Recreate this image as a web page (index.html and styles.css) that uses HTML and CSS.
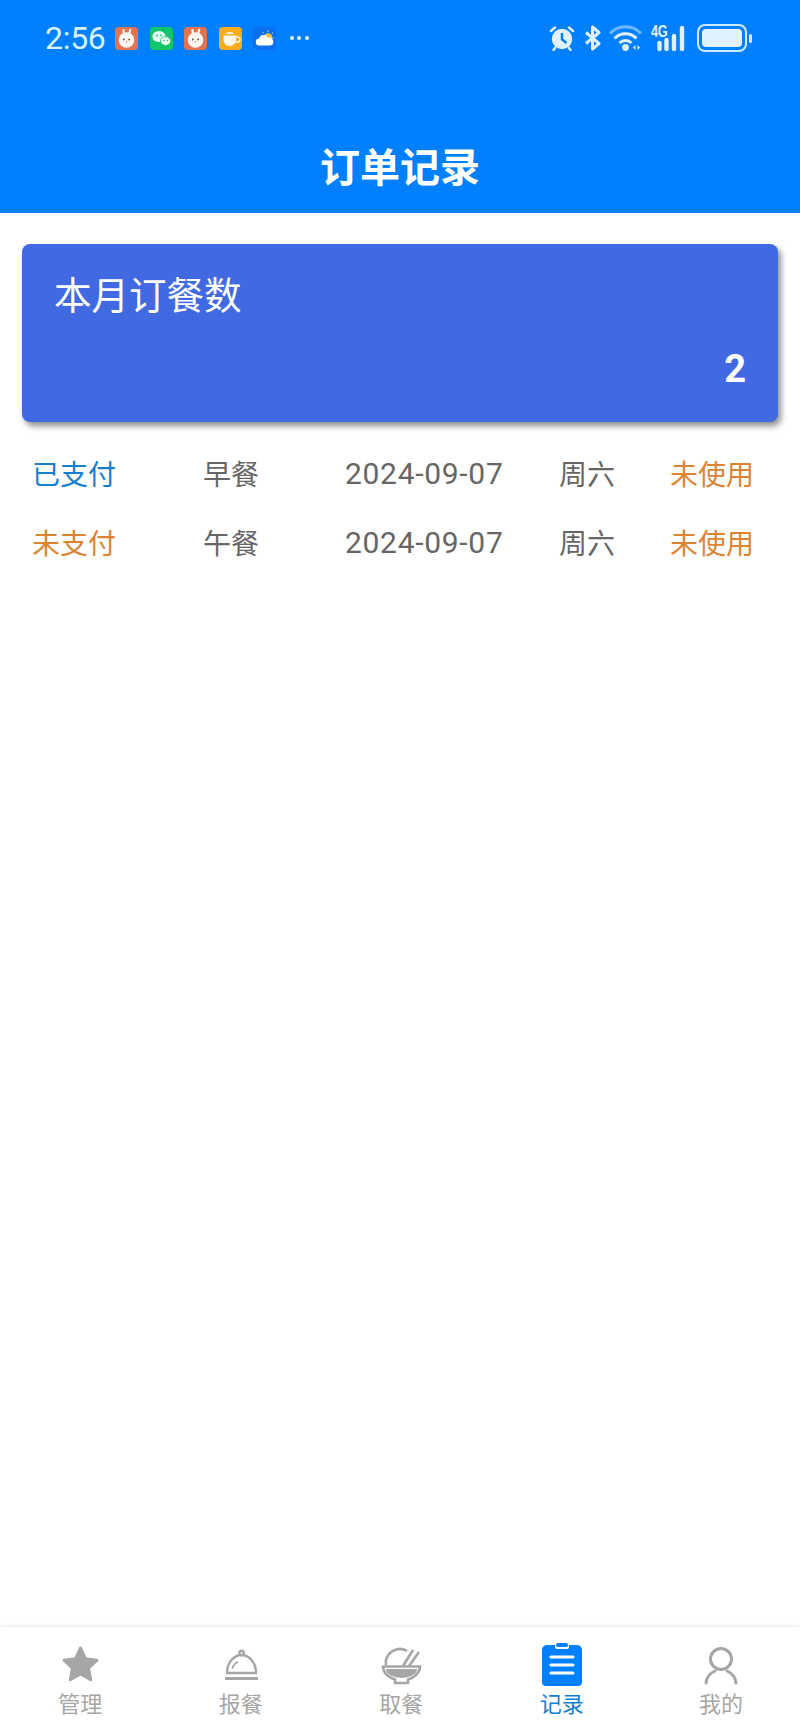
FILE: index.html
```html
<!DOCTYPE html>
<html lang="zh-CN">
<head>
<meta charset="UTF-8" />
<meta name="viewport" content="width=device-width, initial-scale=1" />
<title>订单记录</title>
<link rel="stylesheet" href="styles.css">
</head>
<body>
  <svg class="defs" width="0" height="0">
    <symbol id="rabbit" viewBox="0 0 23 23">
      <rect width="23" height="23" rx="4" fill="#e5744e"/>
      <path d="M9 7 8.400 3M14 7l1.200-4" stroke="#fff8f2" stroke-width="2.200" stroke-linecap="round"/>
      <circle cx="11.500" cy="13" r="7.800" fill="#fff8f2"/>
      <circle cx="8.800" cy="12.500" r=".9" fill="#553"/>
      <circle cx="14.200" cy="12.500" r=".9" fill="#553"/>
      <circle cx="11.500" cy="14.600" r=".7" fill="#c55"/>
    </symbol>
  </svg>

  <header class="header">
    <div class="status">
      <div class="status-left">
        <span class="time">2:56</span>
        <svg class="app"><use href="#rabbit"/></svg>
        <svg class="app" viewBox="0 0 23 23">
          <rect width="23" height="23" rx="4" fill="#12c46c"/>
          <ellipse cx="9" cy="9.500" rx="6.600" ry="5.600" fill="#e8fff2"/>
          <ellipse cx="15.600" cy="14" rx="5.200" ry="4.400" fill="#e8fff2" stroke="#12c46c" stroke-width=".8"/>
          <circle cx="7" cy="8.400" r=".9" fill="#12c46c"/>
          <circle cx="11" cy="8.400" r=".9" fill="#12c46c"/>
          <circle cx="14" cy="13.400" r=".7" fill="#12c46c"/>
          <circle cx="17.400" cy="13.400" r=".7" fill="#12c46c"/>
        </svg>
        <svg class="app"><use href="#rabbit"/></svg>
        <svg class="app" viewBox="0 0 23 23">
          <rect width="23" height="23" rx="4" fill="#f9ab1c"/>
          <path d="M4.500 8.500h12.500v4.500a6 6 0 0 1-6 6h-.5a6 6 0 0 1-6-6z" fill="#fff8e8"/>
          <path d="M17 10h1.500a2 2 0 0 1 0 5H16.500" fill="none" stroke="#fff8e8" stroke-width="1.400"/>
          <path d="M6 7a5 3 0 0 1 9.500 0z" fill="#fff8e8"/>
        </svg>
        <svg class="app" viewBox="0 0 23 23">
          <rect width="23" height="23" rx="4" fill="#0a70f0"/>
          <path d="M15 3.500v1.500M9.500 5l1 1.200M20 5.500 18.800 6.700M21 11h-1.500" stroke="#ffd77a" stroke-width="1"/>
          <circle cx="15" cy="10.500" r="4.200" fill="#ffc03a"/>
          <path d="M6.500 18.500a3.500 3.500 0 0 1-.4-7 4.800 4.800 0 0 1 9-.6 3.900 3.900 0 0 1 2.500 7.600z" fill="#fff"/>
        </svg>
        <span class="more"><i></i><i></i><i></i></span>
      </div>
      <div class="status-right">
        <svg class="ico-alarm" viewBox="0 0 26 26">
          <circle cx="13" cy="14" r="10.200" fill="#e0f2ff"/>
          <path d="M13 8v6.500l4.500 3.500" fill="none" stroke="#0080ff" stroke-width="2.400"/>
          <path d="M2 6l4-3.500M24 6l-4-3.500M6 23l-1.500 2M20 23l1.500 2" stroke="#e0f2ff" stroke-width="2.400" stroke-linecap="round"/>
        </svg>
        <svg class="ico-bt" viewBox="0 0 18 26">
          <path d="M2 7.500 15 18.500 8.500 24V2L15 7.500 2 18.500" fill="none" stroke="#e0f2ff" stroke-width="3" stroke-linejoin="round"/>
        </svg>
        <svg class="ico-wifi" viewBox="0 0 33 26">
          <path d="M1 8.500a21 21 0 0 1 31 0" fill="none" stroke="#6db8ff" stroke-width="3"/>
          <path d="M5.500 13.500a15 15 0 0 1 22 0M10.500 18a8.500 8.500 0 0 1 12 0" fill="none" stroke="#e0f2ff" stroke-width="3"/>
          <circle cx="16.500" cy="22.500" r="3.400" fill="#e0f2ff"/>
          <path d="M26.500 20v5l-2.500-2.500zM28.500 20v5l2.500-2.500z" fill="#e0f2ff"/>
        </svg>
        <div class="signal">
          <span class="net">4G</span>
          <svg viewBox="0 0 33 26">
            <path d="M3.500 18v6M10.500 15v9M18 11v13M26 3v21" stroke="#e0f2ff" stroke-width="4.400" stroke-linecap="round"/>
          </svg>
        </div>
        <div class="battery"><span class="battery-fill"></span></div>
        <span class="battery-cap"></span>
      </div>
    </div>
    <h1 class="title">订单记录</h1>
  </header>

  <main class="content">
    <section class="summary">
      <div class="summary-label">本月订餐数</div>
      <div class="summary-count">2</div>
    </section>

    <div class="order">
      <span class="paid">已支付</span>
      <span>早餐</span>
      <span class="date">2024-09-07</span>
      <span>周六</span>
      <span class="unused">未使用</span>
    </div>
    <div class="order">
      <span class="unpaid">未支付</span>
      <span>午餐</span>
      <span class="date">2024-09-07</span>
      <span>周六</span>
      <span class="unused">未使用</span>
    </div>
  </main>

  <nav class="tabbar">
    <div class="tab">
      <svg class="tab-icon" viewBox="0 0 44 44">
        <path d="M22.500 5l5 10.800 11.500 1.400-8.500 8 2.200 11.500-10.200-5.700-10.200 5.700 2.200-11.500-8.500-8 11.500-1.400z" fill="#a6a6a6" stroke="#a6a6a6" stroke-width="3" stroke-linejoin="round"/>
      </svg>
      <span>管理</span>
    </div>
    <div class="tab">
      <svg class="tab-icon" viewBox="0 0 44 44" fill="none" stroke="#a6a6a6" stroke-width="2.400">
        <path d="M8 30a14.500 18 0 0 1 29 0z"/>
        <circle cx="22.500" cy="10" r="2.200"/>
        <path d="M13.500 25a9 9 0 0 1 5-6" stroke-linecap="round" stroke-width="1.800"/>
        <path d="M6 35.500h33" stroke-width="3"/>
      </svg>
      <span>报餐</span>
    </div>
    <div class="tab">
      <svg class="tab-icon" viewBox="0 0 44 44" fill="none" stroke="#a6a6a6" stroke-width="2.600">
        <path d="M7 22a14 14 0 0 1 21-14"/>
        <path d="M24 23 34 7M30 23 40 9"/>
        <path d="M4 23.500h37a18.500 14 0 0 1-12 13v3.500H16v-3.500a18.500 14 0 0 1-12-13z"/>
        <path d="M7 26h31a15.500 9 0 0 1-31 0z" fill="#a6a6a6" stroke="none"/>
      </svg>
      <span>取餐</span>
    </div>
    <div class="tab tab-active">
      <svg class="tab-icon" viewBox="0 0 44 44">
        <path d="M7 2h8v2a2 2 0 0 0 2 2h10a2 2 0 0 0 2-2V2h8a5 5 0 0 1 5 5v32a4 4 0 0 1-4 4H6a4 4 0 0 1-4-4V7a5 5 0 0 1 5-5z" fill="#0080ff"/>
        <rect x="16" y="0" width="12" height="4" rx="2" fill="#0080ff"/>
        <path d="M11 14h22M11 22h22M11 30h22" stroke="#fff" stroke-width="3" stroke-linecap="round"/>
      </svg>
      <span>记录</span>
    </div>
    <div class="tab">
      <svg class="tab-icon" viewBox="0 0 44 44" fill="none" stroke="#a6a6a6" stroke-width="3">
        <circle cx="22" cy="16" r="10.500"/>
        <path d="M7 40a15.500 15 0 0 1 9-12M37 40a15.500 15 0 0 0-9-12" stroke-linecap="round"/>
      </svg>
      <span>我的</span>
    </div>
  </nav>
</body>
</html>
```

FILE: styles.css
```css
* {
  box-sizing: border-box;
}
body {
  margin: 0;
  height: 100vh;
  display: flex;
  flex-direction: column;
  background-color: #fff;
  font-family: "Noto Sans CJK SC", Roboto, sans-serif;
}
.defs {
  display: none;
}
.header {
  height: 213px;
  background-color: #0080ff;
  color: #fff;
}
.status {
  height: 76px;
  display: flex;
  justify-content: space-between;
  align-items: center;
  padding: 0 48px 0 45px;
}
.status-left,
.status-right {
  display: flex;
  align-items: center;
}
.time {
  width: 70px;
  font-family: Roboto, sans-serif;
  font-size: 32px;
  letter-spacing: -.3px;
  color: #d8f3ff;
}
.app {
  width: 23px;
  height: 23px;
  margin-right: 11.500px;
}
.more {
  display: flex;
  gap: 3.500px;
  margin-left: 2px;
}
.more i {
  width: 4px;
  height: 4px;
  border-radius: 50%;
  background-color: #e0f2ff;
}
.ico-alarm {
  width: 26px;
  height: 26px;
}
.ico-bt {
  width: 18px;
  height: 26px;
  margin-left: 9px;
}
.ico-wifi {
  width: 33px;
  height: 26px;
  margin-left: 7px;
}
.signal {
  position: relative;
  width: 38px;
  height: 26px;
  margin-left: 9px;
}
.signal svg {
  position: absolute;
  left: 5px;
  top: 0;
  width: 33px;
  height: 26px;
}
.net {
  position: absolute;
  left: 0;
  top: -1px;
  font-family: "Liberation Sans", sans-serif;
  font-size: 16px;
  font-weight: 700;
  line-height: 16px;
  letter-spacing: -.5px;
  color: #e0f2ff;
  transform: scaleX(.8);
  transform-origin: left;
}
.battery {
  width: 50px;
  height: 28px;
  margin-left: 8px;
  padding: 3px;
  border: 2px solid #cfeaff;
  border-radius: 8px;
}
.battery-fill {
  display: block;
  height: 100%;
  border-radius: 4px;
  background-color: #e0f2ff;
}
.battery-cap {
  width: 3px;
  height: 9px;
  margin-left: 2px;
  border-radius: 2px;
  background-color: #cfeaff;
}
.title {
  margin: 0;
  padding-top: 59px;
  font-size: 40px;
  font-weight: 700;
  line-height: 60px;
  text-align: center;
}
.content {
  flex: 1;
  padding: 31px 22px 0;
}
.summary {
  height: 178px;
  padding: 21px 32px 0;
  border-radius: 8px;
  background-color: #4169e1;
  box-shadow: 3px 4px 6px rgba(0, 0, 0, 0.45);
  color: #fff;
}
.summary-label {
  font-size: 37.500px;
  line-height: 56px;
}
.summary-count {
  margin-top: 20px;
  font-family: Roboto, sans-serif;
  font-size: 38px;
  font-weight: 700;
  line-height: 56px;
  text-align: right;
}
.order {
  display: grid;
  grid-template-columns: 171px 142px 214px 111px auto;
  align-items: center;
  height: 69px;
  margin-left: 10px;
  font-size: 28px;
  color: #666;
}
.summary + .order {
  margin-top: 16px;
}
.date {
  padding-top: 2px;
  font-family: Roboto, sans-serif;
  font-size: 30px;
  letter-spacing: .7px;
}
.paid {
  color: #1580d0;
}
.unpaid,
.unused {
  color: #dd8433;
}
.tabbar {
  height: 107px;
  display: grid;
  grid-template-columns: repeat(4, 160.500px) 1fr;
  padding-top: 16px;
  border-top: 1px solid #efefef;
  box-shadow: 0 -1px 3px rgba(0, 0, 0, 0.06);
}
.tab {
  display: flex;
  flex-direction: column;
  align-items: center;
  font-size: 22px;
  line-height: 30px;
  color: #a6a6a6;
}
.tab-icon {
  width: 44px;
  height: 44px;
}
.tab-active {
  color: #1580d0;
}
```
